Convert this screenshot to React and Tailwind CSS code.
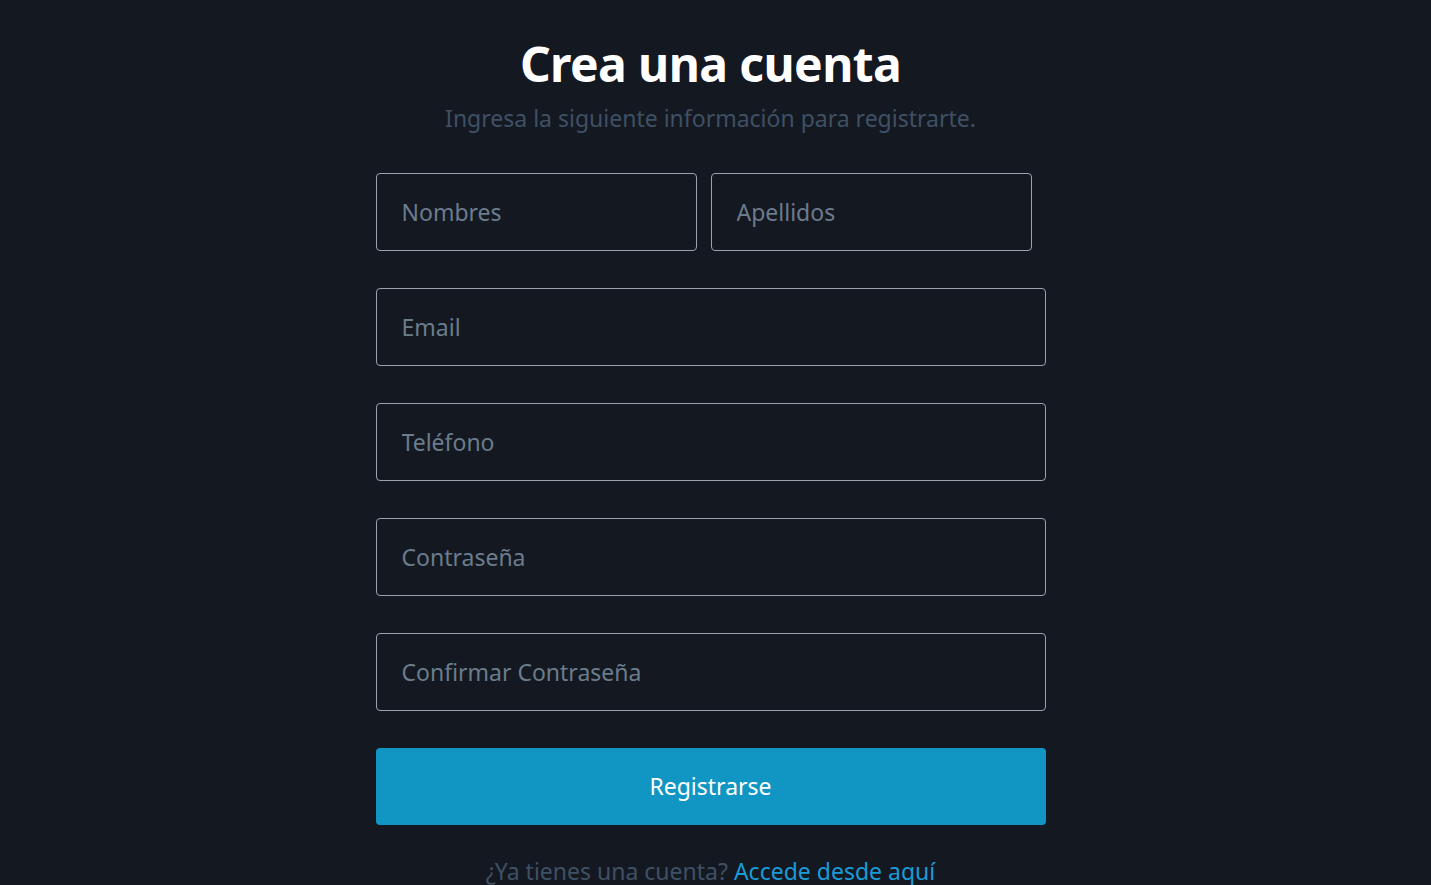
import React from "react";

const font = { fontFamily: '"Noto Sans", "Open Sans", sans-serif' };

const Field = ({ placeholder, type = "text", className = "" }) => (
    <input
        type={type}
        placeholder={placeholder}
        className={`h-[78px] rounded border border-[#9aa3ad] bg-transparent px-[25px] text-[23px] text-white placeholder:text-[#6b7c8c] outline-none ${className}`}
    />
);

export default function App() {
    return (
        <div
            className="min-h-screen w-full bg-[#141821] flex flex-col items-center pt-[30px] pr-[10px]"
            style={font}
        >
            <h1 className="text-[48px] font-bold text-white leading-[68px] tracking-[-0.6px]">
                Crea una cuenta
            </h1>
            <p className="text-[23px] text-[#3f5064] leading-[36px] mt-[2px]">
                Ingresa la siguiente información para registrarte.
            </p>

            <form className="w-[670px] mt-[37px] flex flex-col gap-[37px]">
                <div className="flex gap-[14px]">
                    <Field placeholder="Nombres" className="w-[321px]" />
                    <Field placeholder="Apellidos" className="w-[321px]" />
                </div>
                <Field placeholder="Email" type="email" className="w-full" />
                <Field placeholder="Teléfono" className="w-full" />
                <Field placeholder="Contraseña" type="password" className="w-full" />
                <Field placeholder="Confirmar Contraseña" type="password" className="w-full" />
                <button
                    type="button"
                    className="h-[77px] w-full rounded bg-[#1196c3] text-[23px] text-white"
                >
                    Registrarse
                </button>
            </form>

            <p className="mt-[28px] text-[23px] text-[#3f5064] leading-[36px]">
                ¿Ya tienes una cuenta?{" "}
                <a href="#" className="text-[#1a9bd7]">
                    Accede desde aquí
                </a>
            </p>
        </div>
    );
}
